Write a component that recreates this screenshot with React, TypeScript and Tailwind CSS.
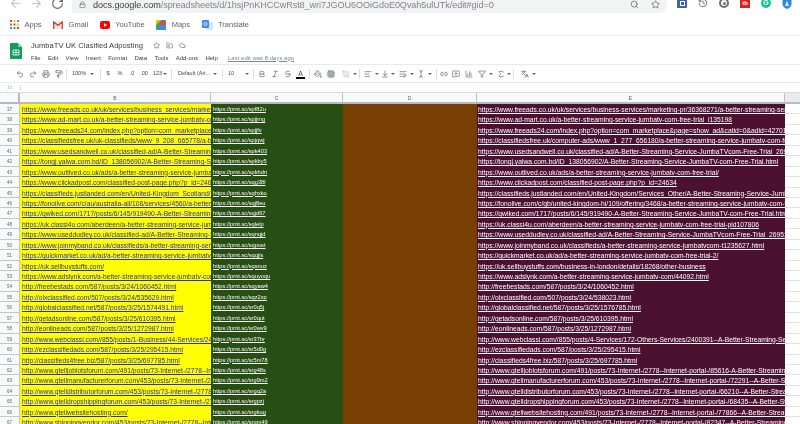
import React from "react";
import { ArrowLeft, ArrowRight, RotateCw, Lock, Search, Star, Undo2, Redo2, Printer, PaintRoller, Bold, Italic, Strikethrough, PaintBucket, Grid3x3, Combine, AlignLeft, ArrowDownToLine, WrapText, TextCursor, Link2, MessageSquarePlus, BarChart3, Filter, Sigma, FolderInput, Cloud, History, Languages } from "lucide-react";

const rows: [number, string, string, string][] = [
  [37, "https://www.freeads.co.uk/uk/services/business_services/marketing-pr/36368271/a-better", "spf82u", "https://www.freeads.co.uk/uk/services/business-services/marketing-pr/36368271/a-better-streaming-service-jumbatv"],
  [38, "https://www.ad-mart.co.uk/a-better-streaming-service-jumbatv-com-free-trial_i135198", "spjjmg", "https://www.ad-mart.co.uk/a-better-streaming-service-jumbatv-com-free-trial_i135198"],
  [39, "https://www.freeads24.com/index.php?option=com_marketplace&page=show_ad&catid=0", "spjjfv", "https://www.freeads24.com/index.php?option=com_marketplace&page=show_ad&catid=0&adid=4270123"],
  [40, "https://classifiedsfree.uk/uk-classifieds/www_9_208_665778/a-better-streaming", "spjqwj", "https://classifiedsfree.uk/computer-ads/www_1_277_656180/a-better-streaming-service-jumbatv-com-free-trial"],
  [41, "https://www.usedsandwell.co.uk/classified-ad/A-Better-Streaming-Service-JumbaTV", "spk403", "https://www.usedsandwell.co.uk/classified-ad/A-Better-Streaming-Service-JumbaTVcom-Free-Trial_2695123"],
  [42, "https://tongj.yalwa.com.bd/ID_138056902/A-Better-Streaming-Service-JumbaTV-com", "spkby5", "https://tongj.yalwa.com.bd/ID_138056902/A-Better-Streaming-Service-JumbaTV-com-Free-Trial.html"],
  [43, "https://www.outlived.co.uk/ads/a-better-streaming-service-jumbatv-com-free-trial/", "spkhdn", "https://www.outlived.co.uk/ads/a-better-streaming-service-jumbatv-com-free-trial/"],
  [44, "https://www.clickadpost.com/classified-post-page.php?p_id=24634", "sqg38l", "https://www.clickadpost.com/classified-post-page.php?p_id=24634"],
  [45, "https://classifieds.justlanded.com/en/United-Kingdom_Scotland/Services_Other/A-Better", "sqhxko", "https://classifieds.justlanded.com/en/United-Kingdom/Services_Other/A-Better-Streaming-Service-JumbaTV-com"],
  [46, "https://fonolive.com/c/au/australia-all/108/services/4560/a-better-streaming-service", "sqj8eu", "https://fonolive.com/c/gb/united-kingdom-hi/109/offering/3468/a-better-streaming-service-jumbatv-com-free-trial"],
  [47, "https://qwiked.com/1717/posts/6/145/919490-A-Better-Streaming-Service-JumbaTV-com", "sqjd67", "https://qwiked.com/1717/posts/6/145/919490-A-Better-Streaming-Service-JumbaTV-com-Free-Trial.html"],
  [48, "https://uk.classi4u.com/aberdeen/a-better-streaming-service-jumbatv-com-free-trial", "sqlelp", "https://uk.classi4u.com/aberdeen/a-better-streaming-service-jumbatv-com-free-trial-pid107806"],
  [49, "https://www.useddudley.co.uk/classified-ad/A-Better-Streaming-Service-JumbaTVcom", "sqnqjd", "https://www.useddudley.co.uk/classified-ad/A-Better-Streaming-Service-JumbaTVcom-Free-Trial_2695123"],
  [50, "https://www.joinmyband.co.uk/classifieds/a-better-streaming-service-jumbatvcom-t1235627", "sqpost", "https://www.joinmyband.co.uk/classifieds/a-better-streaming-service-jumbatvcom-t1235627.html"],
  [51, "https://quickmarket.co.uk/ad/a-better-streaming-service-jumbatv-com-free-trial-2/", "sqqjis", "https://quickmarket.co.uk/ad/a-better-streaming-service-jumbatv-com-free-trial-2/"],
  [52, "https://uk.sellbuystuffs.com/", "sqsnuz", "https://uk.sellbuystuffs.com/business-in-london/details/18268/other-business"],
  [53, "https://www.adslynk.com/a-better-streaming-service-jumbatv-com/44092.html", "squyoqu", "https://www.adslynk.com/a-better-streaming-service-jumbatv-com/44092.html"],
  [54, "http://freebestads.com/587/posts/3/24/1060452.html", "sqyaw4", "http://freebestads.com/587/posts/3/24/1060452.html"],
  [55, "http://olxclassified.com/507/posts/3/24/535629.html", "sqz2xp", "http://olxclassified.com/507/posts/3/24/538023.html"],
  [56, "http://globalclassified.net/587/posts/3/25/1574491.html", "sr0q5j", "http://globalclassified.net/587/posts/3/25/1576785.html"],
  [57, "http://getadsonline.com/587/posts/3/25/610395.html", "sr0qut", "http://getadsonline.com/587/posts/3/25/610395.html"],
  [58, "http://eonlineads.com/587/posts/3/25/1272987.html", "sr0wv9", "http://eonlineads.com/587/posts/3/25/1272987.html"],
  [59, "http://www.webclassi.com//855/posts/1-Business/44-Services/2400391--A-Better", "sr37br", "http://www.webclassi.com//855/posts/4-Services/172-Others-Services/2400391--A-Better-Streaming-Service"],
  [60, "http://ezclassifiedads.com/587/posts/3/25/295415.html", "sr5d0g", "http://ezclassifiedads.com/587/posts/3/25/295415.html"],
  [61, "http://classifieds4free.biz/587/posts/3/25/697785.html", "sr5m78", "http://classifieds4free.biz/587/posts/3/25/697785.html"],
  [62, "http://www.qtelljoblotsforum.com/491/posts/73-Internet-/2778--Internet-portal-/85616", "srg48s", "http://www.qtelljoblotsforum.com/491/posts/73-Internet-/2778--Internet-portal-/85616-A-Better-Streaming-Service"],
  [63, "http://www.qtellmanufacturerforum.com/453/posts/73-Internet-/2778--Internet-portal", "srg9m2", "http://www.qtellmanufacturerforum.com/453/posts/73-Internet-/2778--Internet-portal-/72291--A-Better-Streaming"],
  [64, "http://www.qtelldistributorforum.com/453/posts/73-Internet-/2778--Internet-portal", "srgq2a", "http://www.qtelldistributorforum.com/453/posts/73-Internet-/2778--Internet-portal-/66210--A-Better-Streaming"],
  [65, "http://www.qtelldropshippingforum.com/453/posts/73-Internet-/2778--Internet-portal", "srgpzj", "http://www.qtelldropshippingforum.com/453/posts/73-Internet-/2778--Internet-portal-/68435--A-Better-Streaming"],
  [66, "http://www.qtellwebsitehosting.com/", "srgkug", "http://www.qtellwebsitehosting.com/491/posts/73-Internet-/2778--Internet-portal-/77866--A-Better-Streaming"],
  [67, "http://www.shippingvendor.com/453/posts/73-Internet-/2778--Internet-portal", "srgm49", "http://www.shippingvendor.com/453/posts/73-Internet-/2778--Internet-portal-/82347--A-Better-Streaming"],
];

const bookmarks = [
  { label: "Apps", icon: <svg viewBox="0 0 9 9" className="w-[9px] h-[9px]"><rect x="0" y="0" width="2" height="2" fill="#ea4335"/><rect x="3.5" y="0" width="2" height="2" fill="#fbbc05"/><rect x="7" y="0" width="2" height="2" fill="#4285f4"/><rect x="0" y="3.5" width="2" height="2" fill="#34a853"/><rect x="3.5" y="3.5" width="2" height="2" fill="#ea4335"/><rect x="7" y="3.5" width="2" height="2" fill="#fbbc05"/><rect x="0" y="7" width="2" height="2" fill="#4285f4"/><rect x="3.5" y="7" width="2" height="2" fill="#34a853"/><rect x="7" y="7" width="2" height="2" fill="#ea4335"/></svg> },
  { label: "Gmail", icon: <svg viewBox="0 0 10 8" className="w-[10px] h-[8px]"><rect width="10" height="8" rx="1" fill="#e8e8e8"/><path d="M0.7 8V1L5 4.4 9.3 1v7" fill="none" stroke="#d44638" strokeWidth="1.4"/></svg> },
  { label: "YouTube", icon: <svg viewBox="0 0 10 8" className="w-[10px] h-[8px]"><rect width="10" height="8" rx="2" fill="#f00"/><path d="M4 2.2v3.6L7 4z" fill="#fff"/></svg> },
  { label: "Maps", icon: <svg viewBox="0 0 10 10" className="w-[10px] h-[10px]"><rect width="10" height="10" rx="1" fill="#34a853"/><path d="M0 10 10 0v10z" fill="#4285f4"/><path d="M0 0h5L0 5z" fill="#fbbc05"/><circle cx="7" cy="3" r="2.6" fill="#ea4335"/></svg> },
  { label: "Translate", icon: <svg viewBox="0 0 11 10" className="w-[11px] h-[10px]"><rect x="4" y="2" width="7" height="8" rx="1" fill="#d2e3fc"/><rect width="7" height="8" rx="1" fill="#4285f4"/><circle cx="3.5" cy="4" r="1.6" fill="none" stroke="#fff" strokeWidth="0.8"/></svg> },
];

const menus = ["File", "Edit", "View", "Insert", "Format", "Data", "Tools", "Add-ons", "Help"];

function Caret({ wide }: { wide?: boolean }) {
  return <span className={"w-0 h-0 border-x-[2px] border-x-transparent border-t-[2px] border-t-[#5f6368] shrink-0 " + (wide ? "mx-[3px]" : "mx-[1px]")} />;
}
function Sep() {
  return <span className="w-px h-[10px] bg-[#dadce0] mx-[1px] shrink-0" />;
}
function T({ children }: { children: React.ReactNode }) {
  return <span className="text-[5.5px] text-[#444746] leading-none whitespace-nowrap">{children}</span>;
}

export default function App() {
  const ic = "w-[8px] h-[8px] text-[#5f6368]";
  const tool = "w-[13px] flex justify-center items-center shrink-0";
  const tool12 = "w-[12px] flex justify-center items-center shrink-0";
  return (
    <div className="w-[800px] h-[424px] overflow-hidden bg-white flex flex-col font-['Liberation_Sans',Arial,sans-serif] blur-[0.5px]">
      {/* browser top bar */}
      <div className="h-[13px] flex items-start overflow-hidden shrink-0">
        <div className="w-[72px] flex items-center pl-[9px] gap-[8px] -mt-[3px] text-[#5f6368] shrink-0">
          <ArrowLeft className="w-[13px] h-[13px] text-[#c0c3c7]" />
          <ArrowRight className="w-[13px] h-[13px] text-[#c0c3c7]" />
          <RotateCw className="w-[13px] h-[13px]" />
        </div>
        <div className="w-[595px] h-[13px] bg-[#f1f3f4] rounded-br-[7px] flex items-start pl-[7px] pr-[7px] shrink-0">
          <Lock className="w-[7px] h-[7px] text-[#5f6368] mt-[1px]" />
          <span className="text-[9.1px] leading-[10px] tracking-[-0.07px] ml-[7px] text-[#80868b] whitespace-nowrap"><span className="text-[#3c4043]">docs.google.com</span>/spreadsheets/d/1hsjPnKHCCwRst8_wri7JGOU6OOiGdoE0Qvah5ulUTk/edit#gid=0</span>
          <span className="flex-1" />
          <Search className="w-[9px] h-[9px] text-[#5f6368] mr-[12px]" />
          <Star className="w-[9px] h-[9px] text-[#5f6368]" />
        </div>
        <div className="flex-1 flex items-start pl-[10px] gap-[11px] -mt-[2px]">
          <span className="w-[10px] h-[10px] bg-[#3f5fb0] rounded-[1px] flex items-center justify-center"><span className="w-[5px] h-[5px] border border-white" /></span>
          <History className="w-[10px] h-[10px] text-[#5f6368]" />
          <span className="w-[10px] h-[10px] rounded-full border-[2px] border-[#6b6f73] flex items-center justify-center"><span className="w-[3px] h-[3px] bg-[#6b6f73] rounded-full" /></span>
          <span className="w-[10px] h-[10px] bg-[#e02020] text-white text-[6px] font-bold leading-[10px] text-center">tb</span>
          <span className="w-[10px] h-[10px] rounded-full bg-[#15c39a] text-white text-[7px] font-bold leading-[10px] text-center">G</span>
          <svg viewBox="0 0 10 11" className="w-[10px] h-[11px]"><path d="M5 0l4.5 1.5V6c0 2.5-2 4-4.5 5C2.500 10 .5 8.500.5 6V1.500z" fill="#2f86d6"/><path d="M5 2.500 7 8H3z" fill="#d7ecfb"/></svg>
        </div>
      </div>
      {/* bookmarks */}
      <div className="h-[23px] flex items-center pl-[10px] gap-[11.5px] border-b border-[#e8eaed] shrink-0 pt-[1px]">
        {bookmarks.map((b) => (
          <div key={b.label} className="flex items-center gap-[5.5px] text-[7.5px] text-[#5f6368]">
            {b.icon}
            <span>{b.label}</span>
          </div>
        ))}
      </div>
      {/* doc header */}
      <div className="h-[29px] flex items-center pl-[10px] pt-[2px] border-b border-[#e8eaed] shrink-0">
        <svg viewBox="0 0 12 16" className="w-[12px] h-[16px] mr-[9px] shrink-0"><path d="M1 0h7l4 4v11a1 1 0 0 1-1 1H1a1 1 0 0 1-1-1V1a1 1 0 0 1 1-1z" fill="#0f9d58"/><path d="M8 0l4 4H8z" fill="#87ceac"/><path d="M3 7h6v5H3zM3 9.500h6M6 7v5" fill="none" stroke="#fff" strokeWidth="0.8"/></svg>
        <div className="flex flex-col gap-[4px]">
          <div className="flex items-center">
            <span className="text-[7.6px] leading-[9px] text-[#3c4043] whitespace-nowrap">JumbaTV UK Clasified Adposting</span>
            <Star className="w-[7px] h-[7px] text-[#5f6368] ml-[10px]" />
            <FolderInput className="w-[7px] h-[7px] text-[#5f6368] ml-[6px]" />
            <Cloud className="w-[7px] h-[7px] text-[#5f6368] ml-[6px]" />
          </div>
          <div className="flex items-center gap-[7.3px] text-[6px] leading-[8px] text-[#3c4043]">
            {menus.map((m) => <span key={m}>{m}</span>)}
            <span className="ml-[3px] underline text-[#80868b]">Last edit was 8 days ago</span>
          </div>
        </div>
      </div>
      {/* toolbar */}
      <div className="h-[18px] flex items-center pl-[13px] pt-[1px] border-b border-[#e8eaed] shrink-0">
        <span className={tool}><Undo2 className={ic} /></span>
        <span className={tool}><Redo2 className={ic} /></span>
        <span className={tool}><Printer className={ic} /></span>
        <span className={tool}><PaintRoller className={ic} /></span>
        <Sep />
        <span className="ml-[4px] w-[15px] flex items-center shrink-0"><T>100%</T></span>
        <Caret wide />
        <span className="ml-[2px] flex items-center"><Sep /></span>
        <span className={tool12}><T>$</T></span>
        <span className={tool12}><T>%</T></span>
        <span className={tool12}><T>.0</T></span>
        <span className={tool12}><T>.00</T></span>
        <span className="ml-[3px] w-[9px] flex items-center shrink-0"><T>123</T></span>
        <Caret />
        <span className="ml-[2px] flex items-center"><Sep /></span>
        <span className="ml-[5px] w-[32px] flex items-center shrink-0"><T>Default (Ari...</T></span>
        <Caret wide />
        <span className="ml-[1px] flex items-center"><Sep /></span>
        <span className="ml-[4px] w-[14px] flex items-center shrink-0"><T>10</T></span>
        <Caret wide />
        <Sep />
        <span className={tool}><Bold className={ic} /></span>
        <span className={tool}><Italic className={ic} /></span>
        <span className={tool}><Strikethrough className={ic} /></span>
        <span className={tool + " flex-col"}><span className="text-[7px] leading-[7px] text-[#444746]">A</span><span className="w-[9px] h-[2px] bg-black" /></span>
        <span className="ml-[1px] flex items-center"><Sep /></span>
        <span className={tool}><PaintBucket className={ic} /></span>
        <span className={tool}><Grid3x3 className={ic} /></span>
        <span className={"ml-[2px] " + tool}><Combine className="w-[8px] h-[8px] text-[#bdc1c6]" /></span>
        <Caret />
        <Sep />
        <span className={tool}><AlignLeft className={ic} /></span>
        <Caret />
        <span className="w-[10px] flex justify-center items-center shrink-0"><ArrowDownToLine className={ic} /></span>
        <Caret />
        <span className={"ml-[1px] " + tool12}><WrapText className={ic} /></span>
        <Caret />
        <span className={tool12}><TextCursor className={ic} /></span>
        <Caret />
        <span className="ml-[2px] flex items-center"><Sep /></span>
        <span className="w-[11px] flex justify-center items-center shrink-0"><Link2 className={ic} /></span>
        <span className={tool}><MessageSquarePlus className={ic} /></span>
        <span className={tool}><BarChart3 className={ic} /></span>
        <span className={tool}><Filter className={ic} /></span>
        <Caret />
        <span className="ml-[2px] w-[10px] flex justify-center items-center shrink-0"><Sigma className={ic} /></span>
        <Caret />
        <Sep />
        <span className={"ml-[3px] " + tool}><Languages className={ic} /></span>
        <Caret />
      </div>
      {/* formula bar */}
      <div className="h-[10px] flex items-center border-b border-[#dadce0] shrink-0">
        <span className="w-[20px] text-center italic text-[7px] text-[#b0b3b8] font-['Liberation_Serif',serif]">fx</span>
        <span className="w-px h-[6px] bg-[#dadce0]" />
      </div>
      {/* column header */}
      <div className="h-[11px] flex text-[5px] text-[#5f6368] bg-[#f8f9fa] border-b-2 border-[#b7b9bc] shrink-0">
        <div className="w-[20px] border-r-2 border-[#b7b9bc]" />
        <div className="w-[191px] text-center leading-[10px] border-r border-[#c0c0c0]">B</div>
        <div className="w-[132px] text-center leading-[10px] border-r border-[#c0c0c0]">C</div>
        <div className="w-[134px] text-center leading-[10px] border-r border-[#c0c0c0]">D</div>
        <div className="w-[308px] text-center leading-[10px] border-r border-[#c0c0c0]">E</div>
        <div className="flex-1 bg-[#e8eaed]" />
      </div>
      {/* rows */}
      <div className="flex flex-col">
        {rows.map(([n, b, c, e]) => (
          <div key={n} className="h-[10.45px] flex shrink-0 leading-[11.5px] whitespace-nowrap">
            <div className="w-[20px] shrink-0 bg-[#f8f9fa] border-r border-b border-[#c4c7c5] text-center text-[4.5px] text-[#5f6368]">{n}</div>
            <div className="w-[191px] shrink-0 bg-[#ffff00] pl-[2px] overflow-hidden text-[#2a2fb8] underline text-[6.7px]">{b}</div>
            <div className="w-[132px] shrink-0 bg-[#274e13] pl-[2px] overflow-hidden text-white underline text-[5.7px]">https://prnt.sc/{c}</div>
            <div className="w-[134px] shrink-0 bg-[#783f04]" />
            <div className="w-[308px] shrink-0 bg-[#4c1130] pl-[1px] overflow-hidden text-white underline text-[6.75px]">{e}</div>
            <div className="flex-1 border-b border-[#e2e3e3]" />
          </div>
        ))}
      </div>
    </div>
  );
}
